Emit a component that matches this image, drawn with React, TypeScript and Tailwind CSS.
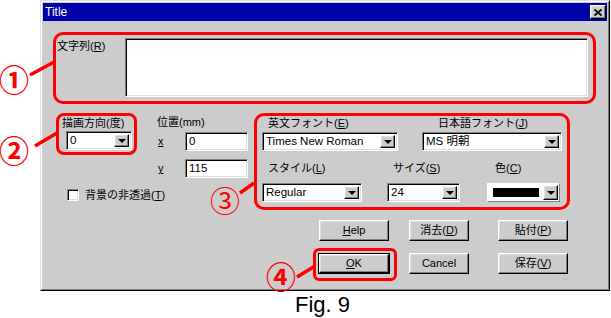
import React from "react";

const sunken =
  "border border-t-[#808080] border-l-[#808080] border-r-white border-b-white shadow-[inset_1px_1px_0_#000,inset_-1px_-1px_0_#dfdfdf]";
const raised =
  "border border-t-white border-l-white border-r-black border-b-black shadow-[inset_-1px_-1px_0_#808080,inset_1px_1px_0_#dfdfdf]";

const Key = ({ k }: { k: string }) => <span className="underline underline-offset-1">{k}</span>;

const Arrow = () => (
  <div className={`${raised} bg-[#cccccc] w-[15px] h-full flex items-center justify-center`}>
    <div className="w-0 h-0 border-x-[4px] border-x-transparent border-t-[4px] border-t-black" />
  </div>
);

const Dropdown = ({ className = "", children }: { className?: string; children?: React.ReactNode }) => (
  <div className={`${sunken} bg-white h-[19px] flex items-center p-[2px] ${className}`}>
    <div className="flex-1 pl-[1px] text-[11.5px] leading-[13px] whitespace-nowrap overflow-hidden">{children}</div>
    <Arrow />
  </div>
);

const Button = ({ className = "", children }: { className?: string; children: React.ReactNode }) => (
  <div className={`${raised} bg-[#cccccc] h-[21px] flex items-center justify-center ${className}`}>{children}</div>
);

const Label = ({ className = "", children }: { className?: string; children: React.ReactNode }) => (
  <div className={`leading-[14px] whitespace-nowrap ${className}`}>{children}</div>
);

export default function App() {
  return (
    <div className="relative w-[611px] h-[318px] bg-white overflow-hidden text-[11px] text-black font-['Liberation_Sans','Noto_Sans_CJK_JP',sans-serif]">
      {/* dialog */}
      <div className="ml-[40px] w-[570px] h-[291px] border border-t-[#dfdfdf] border-l-[#dfdfdf] border-r-black border-b-black">
        <div className="h-full border border-t-white border-l-white border-r-[#808080] border-b-[#808080] bg-[#cccccc] p-[1px]">
          <div className="h-[18px] bg-[#0000a8] flex items-center justify-between pl-[2px] pr-[1px]">
            <span className="text-white text-[12px]">Title</span>
            <div className={`${raised} bg-[#cccccc] w-[16px] h-[14px] flex items-center justify-center`}>
              <svg width="8" height="7" viewBox="0 0 8 7">
                <path d="M0.5 0.5 L7.5 6.5 M7.5 0.5 L0.5 6.5" stroke="#000" strokeWidth="1.8" />
              </svg>
            </div>
          </div>

          <div className="pl-[10px] pt-[11px]">
            {/* 文字列 */}
            <div className="w-[543px] h-[72px] border-[3px] border-[#ff0000] rounded-[10px] flex">
              <Label className="w-[69px] pl-[1px] pt-[4px]">
                文字列(<Key k="R" />)
              </Label>
              <div className={`${sunken} bg-white w-[463px] h-[59px] mt-[3px]`} />
            </div>

            <div className="flex items-start mt-[9px]">
              <div className="ml-[3px] w-[192px]">
                <div className="flex items-start">
                  {/* 描画方向 */}
                  <div className="w-[81px] h-[42px] border-[3px] border-[#ff0000] rounded-[8px]">
                    <Label className="ml-[3px]">描画方向(度)</Label>
                    <Dropdown className="ml-[7px] mt-[1px] w-[66px]">0</Dropdown>
                  </div>
                  {/* 位置 */}
                  <div className="ml-[20px] w-[91px] pt-[2px]">
                    <Label>位置(mm)</Label>
                    <div className="flex items-center mt-[3px]">
                      <span className="w-[28px] pl-[1px] underline">x</span>
                      <div className={`${sunken} bg-white w-[63px] h-[19px] pl-[3px] text-[11.5px] leading-[17px]`}>0</div>
                    </div>
                    <div className="flex items-center mt-[8px]">
                      <span className="w-[28px] pl-[1px] underline">y</span>
                      <div className={`${sunken} bg-white w-[63px] h-[19px] pl-[3px] text-[11.5px] leading-[17px]`}>115</div>
                    </div>
                  </div>
                </div>
                <div className="flex items-center mt-[10px] ml-[11px]">
                  <div className={`${sunken} bg-white w-[12px] h-[12px]`} />
                  <Label className="ml-[6px]">
                    背景の非透過(<Key k="T" />)
                  </Label>
                </div>
              </div>

              {/* フォント */}
              <div className="ml-[6px] w-[316px] h-[97px] border-[3px] border-[#ff0000] rounded-[10px]">
                <div className="flex h-[16px]">
                  <Label className="w-[181px] pl-[11px]">
                    英文フォント(<Key k="E" />)
                  </Label>
                  <Label>
                    日本語フォント(<Key k="J" />)
                  </Label>
                </div>
                <div className="flex">
                  <Dropdown className="ml-[5px] w-[136px]">Times New Roman</Dropdown>
                  <Dropdown className="ml-[24px] w-[140px]">MS 明朝</Dropdown>
                </div>
                <div className="flex h-[16px] mt-[10px]">
                  <Label className="w-[136px] pl-[11px]">
                    スタイル(<Key k="L" />)
                  </Label>
                  <Label className="w-[102px]">
                    サイズ(<Key k="S" />)
                  </Label>
                  <Label>
                    色(<Key k="C" />)
                  </Label>
                </div>
                <div className="flex mt-[6px]">
                  <Dropdown className="ml-[5px] w-[100px]">Regular</Dropdown>
                  <Dropdown className="ml-[25px] w-[73px]">24</Dropdown>
                  <div className="ml-[27px] w-[73px] h-[19px] border border-t-white border-l-white border-r-[#808080] border-b-[#808080] bg-white flex items-center p-[1px]">
                    <div className="flex-1 h-full flex items-center px-[4px]">
                      <div className="w-full h-[9px] bg-black" />
                    </div>
                    <Arrow />
                  </div>
                </div>
              </div>
            </div>

            {/* buttons */}
            <div className="mt-[10px]">
              <div className="flex ml-[266px]">
                <Button className="w-[70px]">
                  <Key k="H" />
                  elp
                </Button>
                <Button className="ml-[20px] w-[60px]">
                  消去(<Key k="D" />)
                </Button>
                <Button className="ml-[29px] w-[70px]">
                  貼付(<Key k="P" />)
                </Button>
              </div>
              <div className="flex items-start mt-[7px] ml-[260px]">
                <div className="w-[84px] h-[33px] border-[3px] border-[#ff0000] rounded-[6px] pl-[2px] pt-[2px]">
                  <div className="w-[72px] h-[21px] border border-black">
                    <Button className="w-full !h-full">
                      <Key k="O" />K
                    </Button>
                  </div>
                </div>
                <Button className="ml-[12px] mt-[5px] w-[60px]">Cancel</Button>
                <Button className="ml-[29px] mt-[5px] w-[70px]">
                  保存(<Key k="V" />)
                </Button>
              </div>
            </div>
          </div>
        </div>
      </div>

      <div className="ml-[295px] mt-[3px] text-[22px] leading-[22px] font-['Liberation_Sans',sans-serif]">Fig. 9</div>

      {/* annotations */}
      <svg className="absolute left-0 top-0 pointer-events-none" width="611" height="318">
        <g stroke="#ff0000" strokeWidth="3.5">
          <line x1="30" y1="75" x2="54" y2="62" />
          <line x1="35" y1="146" x2="57" y2="133" />
          <line x1="240" y1="193" x2="254" y2="183" />
          <line x1="297" y1="277" x2="315" y2="266" />
        </g>
      </svg>
      <span className="absolute left-[-1px] top-[63px] text-[30px] leading-none font-bold text-[#ff0000] font-['Noto_Sans_CJK_JP',sans-serif]">①</span>
      <span className="absolute left-[-1px] top-[134px] text-[30px] leading-none font-bold text-[#ff0000] font-['Noto_Sans_CJK_JP',sans-serif]">②</span>
      <span className="absolute left-[210px] top-[184px] text-[30px] leading-none text-[#ff0000] font-['Noto_Sans_CJK_JP',sans-serif]">③</span>
      <span className="absolute left-[266px] top-[260px] text-[30px] leading-none font-bold text-[#ff0000] font-['Noto_Sans_CJK_JP',sans-serif]">④</span>
    </div>
  );
}
